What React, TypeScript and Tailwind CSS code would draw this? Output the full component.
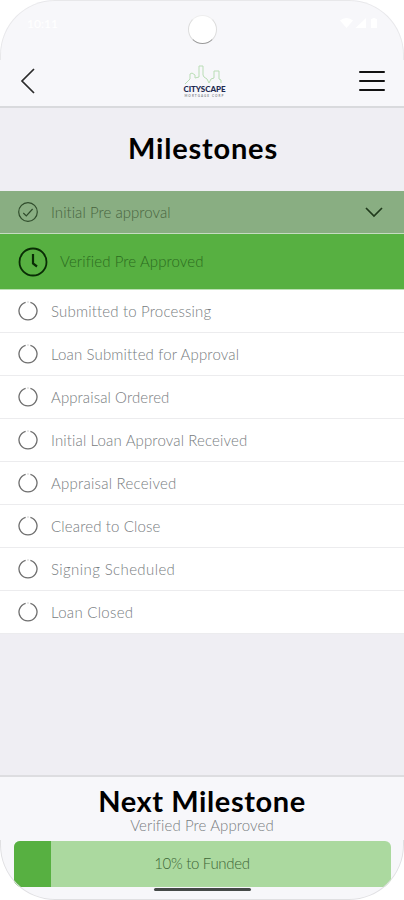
import React from 'react';
import clsx from 'clsx';

const upcoming = [
  { label: 'Submitted to Processing', tracking: 'tracking-[0.18px]' },
  { label: 'Loan Submitted for Approval', tracking: 'tracking-[0.15px]' },
  { label: 'Appraisal Ordered', tracking: 'tracking-[0.1px]' },
  { label: 'Initial Loan Approval Received', tracking: 'tracking-[0.14px]' },
  { label: 'Appraisal Received', tracking: 'tracking-[0.25px]' },
  { label: 'Cleared to Close', tracking: 'tracking-[0.15px]' },
  { label: 'Signing Scheduled', tracking: 'tracking-[0.4px]' },
  { label: 'Loan Closed', tracking: 'tracking-[0.3px]' },
];

function StatusBar() {
  return (
    <div className="flex h-[56px] items-start justify-between pl-[27px] pr-[24px] pt-[17px] text-white">
      <span className="text-xs font-medium leading-[14px]">10:11</span>
      <svg width="40" height="13" viewBox="0 0 40 13" fill="currentColor">
        <path d="M0 3.5C4 0 9 0 13 3.5L6.5 11z" />
        <path d="M26 1v10H15.500z" />
        <path d="M31 2h1.500V1h3v1H37v9h-6z" />
      </svg>
    </div>
  );
}

function Logo() {
  return (
    <div className="flex w-[44px] flex-col items-center">
      <svg width="42" height="20" viewBox="0 0 42 20" fill="none" stroke="#b9ddb5" strokeWidth="1">
        <path d="M1 19l4-4 1-1V9l2-1 3 2v3l4-1V7V1h4v9l1 2 3 2 2 4 2-4 3-1V6h5v8l2 1v3" />
      </svg>
      <span className="text-[8px] font-black leading-[9px] tracking-[-0.05px] text-[#1d2950]">CITYSCAPE</span>
      <span className="whitespace-nowrap text-[3px] font-bold leading-[4px] tracking-[1.1px] text-[#85898f]">MORTGAGE CORP</span>
    </div>
  );
}

// ring with a small break on either side of the top
function PendingIcon() {
  return (
    <svg width="20" height="20" viewBox="0 0 20 20" fill="none" stroke="#6e6e6e" strokeWidth="1.300">
      <path d="M7.600 1.300A9 9 0 1 0 12.400 1.300" />
      <path d="M9.200 1h1.600" opacity="0.250" />
    </svg>
  );
}

export default function App() {
  return (
    <div className="h-[900px] w-[404px] overflow-hidden bg-white font-['Lato',sans-serif]">
      <div className="relative flex h-full flex-col overflow-hidden rounded-[55px] bg-[#efeef3]">
        <header className="h-[108px] shrink-0 border-b-2 border-[#d9dadd] bg-[#f7f7fa]">
          <StatusBar />
          <div className="flex items-center justify-between pl-[20px] pr-[19px]">
            <svg width="16" height="26" viewBox="0 0 16 26" fill="none" stroke="#2b2b2b" strokeWidth="1.700">
              <path d="M14 1L2 13l12 12" />
            </svg>
            <div className="h-[49px] pl-[14px] pt-[9px]">
              <Logo />
            </div>
            <svg width="26" height="22" viewBox="0 0 26 22" stroke="#111" strokeWidth="2" strokeLinecap="round">
              <path d="M1 2h24M1 11h24M1 20h24" />
            </svg>
          </div>
        </header>
        <div className="absolute left-[188px] top-[15px] size-[29px] rounded-full border border-b-[#999] border-l-[#ddd] border-r-[#ddd] border-t-[#eee] bg-white" />

        <h1 className="flex h-[83px] shrink-0 items-center justify-center pb-[4px] pl-[2px] text-[29px] font-bold tracking-[0.8px] text-black">Milestones</h1>

        <ul>
          <li className="flex h-[43px] items-center border-b border-[#c5dcc1] bg-[#89ae82] pl-[18px] pr-[21px] text-[#48643f]">
            <svg width="20" height="20" viewBox="0 0 20 20" fill="none" stroke="#304d2c" strokeWidth="1.200">
              <circle cx="10" cy="10" r="9.300" />
              <path d="M5.300 11l3 3 6.300-7" />
            </svg>
            <span className="ml-[13px] text-[15px] font-light tracking-[0.05px]">Initial Pre approval</span>
            <svg className="ml-auto" width="18" height="11" viewBox="0 0 18 11" fill="none" stroke="#203a1c" strokeWidth="1.700">
              <path d="M1 1l8 8 8-8" />
            </svg>
          </li>
          <li className="flex h-[56px] items-center border-b border-[#bce0b4] bg-[#57b041] pl-[18px] text-[#2b6b1f]">
            <svg width="30" height="30" viewBox="0 0 30 30" fill="none" stroke="#092c05" strokeWidth="1.800">
              <circle cx="15" cy="15" r="13.500" />
              <path d="M15 7v9.500l4 3" strokeWidth="2.200" />
            </svg>
            <span className="ml-[12px] text-[15px] font-light tracking-[0.1px]">Verified Pre Approved</span>
          </li>
          {upcoming.map((item) => (
            <li key={item.label} className="flex h-[43px] items-center border-b border-[#ececee] bg-white pl-[18px] text-[#777c80]">
              <PendingIcon />
              <span className={clsx('ml-[13px] text-[15px] font-light', item.tracking)}>{item.label}</span>
            </li>
          ))}
        </ul>

        <footer className="mt-auto flex h-[125px] shrink-0 flex-col items-center border-t-2 border-[#dddde0] bg-[#f7f7fa]">
          <h2 className="mt-[9px] text-[29px] font-bold leading-[30px] tracking-[0.6px] text-black">Next Milestone</h2>
          <p className="text-[15px] font-light leading-[18px] tracking-[0.1px] text-[#777c80]">Verified Pre Approved</p>
          <div className="relative mt-[7px] flex h-[46px] w-[377px] shrink-0 items-center justify-center overflow-hidden rounded-[6px] bg-[#abd99f] pb-px">
            <div className="absolute left-0 top-0 h-full w-[10%] bg-[#57b041]" />
            <span className="text-[15px] font-light tracking-[-0.3px] text-[#3d6636]">10% to Funded</span>
          </div>
          <div className="mt-[1px] h-[3px] w-[97px] shrink-0 rounded-full bg-[#454a48]" />
        </footer>
        {/* bezel edge, only visible around the rounded corners */}
        <div className="pointer-events-none absolute inset-x-0 top-0 h-[60px] rounded-t-[55px] border border-b-0 border-[#e8e8ea]" />
        <div className="pointer-events-none absolute inset-x-0 bottom-0 h-[60px] rounded-b-[55px] border border-t-0 border-[#e0e0e2]" />
      </div>
    </div>
  );
}
